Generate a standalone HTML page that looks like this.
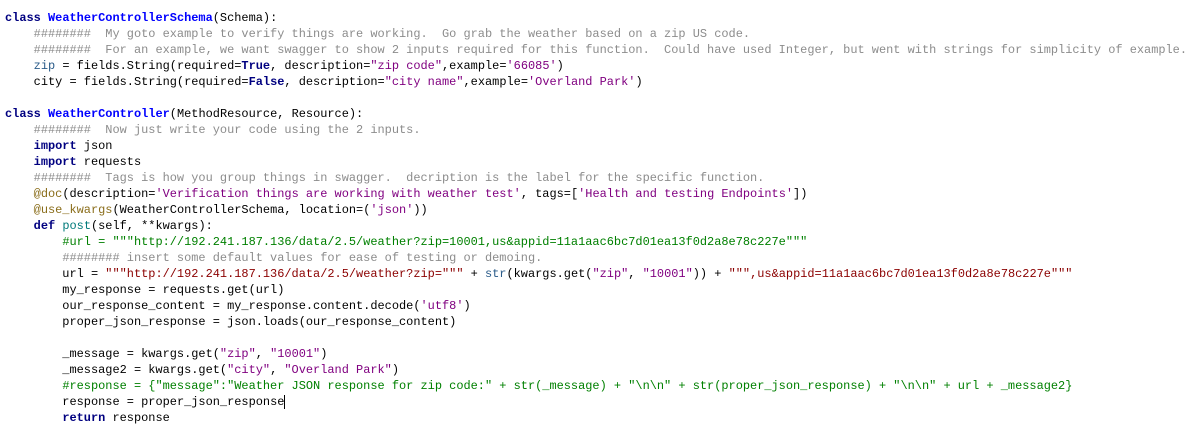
<!DOCTYPE html>
<html><head><meta charset="utf-8"><style>
body{margin:0;background:#fff;width:1195px;height:429px;overflow:hidden}
pre{margin:0;padding:10px 0 0 5px;font-family:"Liberation Mono",monospace;font-size:11.95px;line-height:16.02px;color:#000;white-space:pre}
.k{color:#000080;font-weight:bold}
.c{color:#0000ff;font-weight:bold}
.m{color:#8c8c8c}
.s{color:#800080}
.t{color:#8b0000}
.g{color:#008000}
.d{color:#8a6d1a}
.f{color:#007a7a}
.a{color:#2b5c8a}
.cur{border-right:1px solid #000}
</style></head><body><pre><span class="k">class</span> <span class="c">WeatherControllerSchema</span>(Schema):
    <span class="m">########  My goto example to verify things are working.  Go grab the weather based on a zip US code.</span>
    <span class="m">########  For an example, we want swagger to show 2 inputs required for this function.  Could have used Integer, but went with strings for simplicity of example.</span>
    <span class="a">zip</span> = fields.String(required=<span class="k">True</span>, description=<span class="s">"zip code"</span>,example=<span class="s">'66085'</span>)
    city = fields.String(required=<span class="k">False</span>, description=<span class="s">"city name"</span>,example=<span class="s">'Overland Park'</span>)

<span class="k">class</span> <span class="c">WeatherController</span>(MethodResource, Resource):
    <span class="m">########  Now just write your code using the 2 inputs.</span>
    <span class="k">import</span> json
    <span class="k">import</span> requests
    <span class="m">########  Tags is how you group things in swagger.  decription is the label for the specific function.</span>
    <span class="d">@doc</span>(description=<span class="s">'Verification things are working with weather test'</span>, tags=[<span class="s">'Health and testing Endpoints'</span>])
    <span class="d">@use_kwargs</span>(WeatherControllerSchema, location=(<span class="s">'json'</span>))
    <span class="k">def</span> <span class="f">post</span>(self, **kwargs):
        <span class="g">#url = """http://192.241.187.136/data/2.5/weather?zip=10001,us&amp;appid=11a1aac6bc7d01ea13f0d2a8e78c227e"""</span>
        <span class="m">######## insert some default values for ease of testing or demoing.</span>
        url = <span class="t">"""http://192.241.187.136/data/2.5/weather?zip="""</span> + <span class="a">str</span>(kwargs.get(<span class="s">"zip"</span>, <span class="s">"10001"</span>)) + <span class="t">""",us&amp;appid=11a1aac6bc7d01ea13f0d2a8e78c227e"""</span>
        my_response = requests.get(url)
        our_response_content = my_response.content.decode(<span class="s">'utf8'</span>)
        proper_json_response = json.loads(our_response_content)

        _message = kwargs.get(<span class="s">"zip"</span>, <span class="s">"10001"</span>)
        _message2 = kwargs.get(<span class="s">"city"</span>, <span class="s">"Overland Park"</span>)
        <span class="g">#response = {"message":"Weather JSON response for zip code:" + str(_message) + "\n\n" + str(proper_json_response) + "\n\n" + url + _message2}</span>
        response = <span class="cur">proper_json_response</span>
        <span class="k">return</span> response
</pre></body></html>
